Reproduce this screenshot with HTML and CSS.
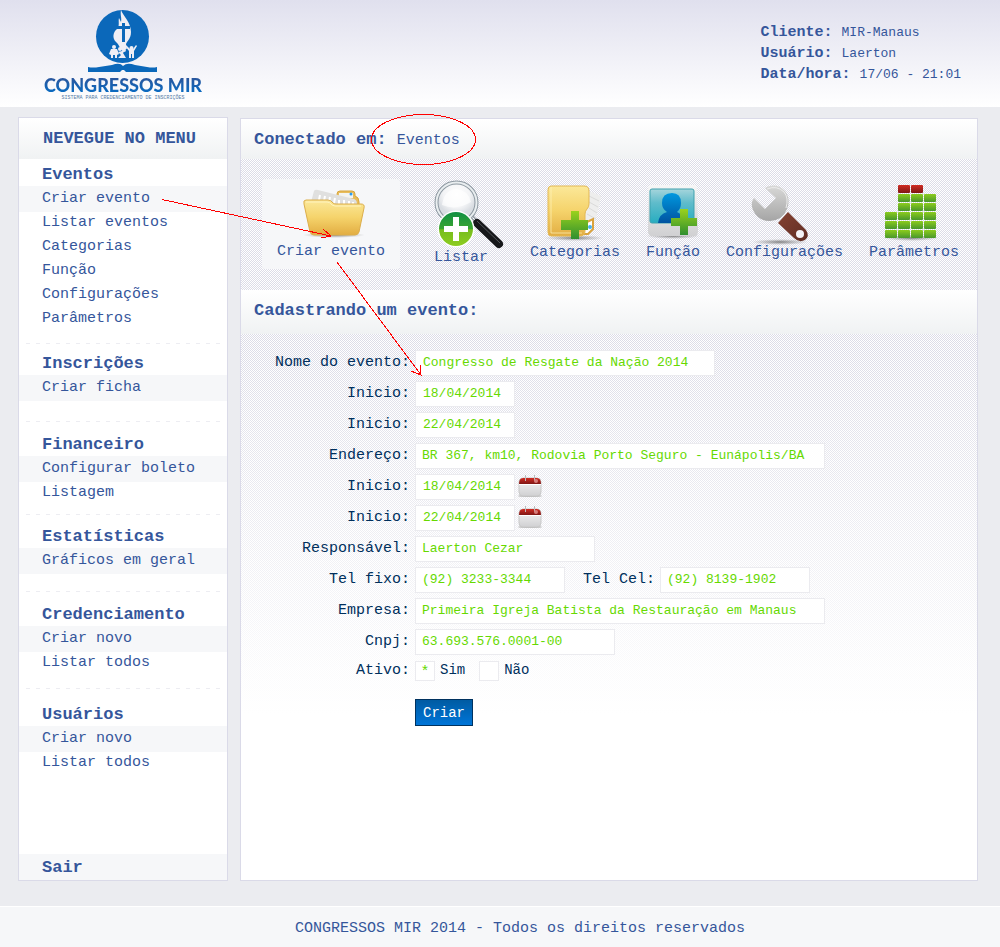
FILE: index.html
```html
<!DOCTYPE html>
<html lang="pt-BR">
<head>
<meta charset="utf-8">
<title>Congressos MIR</title>
<link rel="stylesheet" href="styles.css">
</head>
<body>
<header class="top">
  <a class="logo" href="#">
    <svg class="logo-mark" width="72" height="65" viewBox="0 0 72 65" aria-hidden="true">
      <circle cx="35.500" cy="27.500" r="26.500" fill="#0b68ba"/>
      <path d="M34 1C36 7 44 13 44 23C44 31 39 32 39 36C39 39 41 40 37 40Q41 42 37 43C32 40 33 36 29 33C25 29 26 23 30 20C33 17 31 12 32 9L34 13C35 9 33 6 34 1Z" fill="#eeeef5"/>
      <path d="M36.500 14V33M30 18.500H43" stroke="#0b68ba" stroke-width="3"/>
      <g fill="#eeeef5"><circle cx="27" cy="38" r="2"/><path d="M24 40H30L32 45L30 46V49H28V46H26V49H24V46L22 45Z"/><circle cx="33" cy="40" r="2"/><path d="M31 43L35 42L39 38L40 39L36 44L39 49H31L34 46Z"/><circle cx="44.500" cy="39" r="2"/><path d="M39 36L43 40H46L49 36L50 37L47 42V49H45V45H44V49H42V42L38 37Z"/></g>
      <path d="M1 63V58Q6 59 12 58L25 56Q33 53 36 57Q40 53 48 56L60 58Q66 59 70 58V63H39L37 61L35 61L33 63Z" fill="#0b68ba"/>
    </svg>
    <span class="logo-name">CONGRESSOS MIR</span>
    <span class="logo-tag">SISTEMA PARA CREDENCIAMENTO DE INSCRIÇÕES</span>
  </a>
  <div class="session">
    <div><b>Cliente: </b>MIR-Manaus</div>
    <div><b>Usuário: </b>Laerton</div>
    <div><b>Data/hora: </b>17/06 - 21:01</div>
  </div>
</header>

<main class="columns">
  <nav class="menu">
    <h2 class="bar menu-bar">NEVEGUE NO MENU</h2>
    <section class="group group-events">
      <h3>Eventos</h3>
      <a class="on" href="#">Criar evento</a>
      <a href="#">Listar eventos</a>
      <a href="#">Categorias</a>
      <a href="#">Função</a>
      <a href="#">Configurações</a>
      <a href="#">Parâmetros</a>
    </section>
    <section class="group group-forms">
      <h3>Inscrições</h3>
      <a class="on" href="#">Criar ficha</a>
    </section>
    <section class="group group-finance">
      <h3>Financeiro</h3>
      <a class="on" href="#">Configurar boleto</a>
      <a href="#">Listagem</a>
    </section>
    <section class="group group-stats">
      <h3>Estatísticas</h3>
      <a class="on" href="#">Gráficos em geral</a>
    </section>
    <section class="group group-badges">
      <h3>Credenciamento</h3>
      <a class="on" href="#">Criar novo</a>
      <a href="#">Listar todos</a>
    </section>
    <section class="group group-users">
      <h3>Usuários</h3>
      <a class="on" href="#">Criar novo</a>
      <a href="#">Listar todos</a>
    </section>
    <a class="exit" href="#">Sair</a>
  </nav>

  <div class="panel">
    <h1 class="bar">Conectado em: <span>Eventos</span></h1>
    <nav class="tools">
      <a class="tool tool-on" href="#">
        <svg width="64" height="50" viewBox="0 0 64 50" aria-hidden="true">
          <defs>
            <linearGradient id="gold" x2="0" y2="1"><stop offset="0" stop-color="#fbe899"/><stop offset=".5" stop-color="#f5d36b"/><stop offset="1" stop-color="#e2ad42"/></linearGradient>
            <linearGradient id="green" x2="0" y2="1"><stop offset="0" stop-color="#9bd21c"/><stop offset="1" stop-color="#2f8f2f"/></linearGradient>
            <radialGradient id="shade"><stop offset="0" stop-color="#666" stop-opacity=".8"/><stop offset="1" stop-color="#888" stop-opacity="0"/></radialGradient>
          </defs>
          <ellipse cx="32" cy="47" rx="31" ry="3" fill="url(#shade)"/>
          <path d="M35 12V6Q35 3 38 3H50Q53 3 53 6V8Q57 9 57 14V20H35Z" fill="#e8bd5c" stroke="#d8a53c"/>
          <path d="M37 5H51V10H37Z" fill="#f4f4f1"/><circle cx="49" cy="6" r="1.500" fill="#2b9bf0"/>
          <path d="M9 14L12 3Q13 1 16 2L52 11Q55 12 55 16V24H9Z" fill="#e0e0df"/>
          <path d="M17 12L18 7M22 13L23 8M27 14L28 9M32 15L33 10M37 16V12M42 16V12M47 17V13M51 17V14" stroke="#fff" stroke-width="2"/>
          <path d="M4 12H26Q29 12 31 15Q32 16 34 16H59Q63 16 62 20L57 44Q56 47 53 47H12Q9 47 8 44L2 16Q1 12 4 12Z" fill="url(#gold)" stroke="#dcae4c"/>
          <path d="M4 14H25Q28 14 30 17L33 18H59" fill="none" stroke="#fff3bd"/>
        </svg>
        <span>Criar evento</span>
      </a>
      <a class="tool tool-list" href="#">
        <svg width="70" height="70" viewBox="0 0 70 70" aria-hidden="true">
          <defs>
            <radialGradient id="lens" cy=".3"><stop offset="0" stop-color="#fff"/><stop offset=".65" stop-color="#f3f4f6"/><stop offset="1" stop-color="#d9dde2"/></radialGradient>
            <linearGradient id="disc" x2="0" y2="1"><stop offset="0" stop-color="#119044"/><stop offset=".5" stop-color="#3ba530"/><stop offset=".52" stop-color="#77bd1d"/><stop offset="1" stop-color="#8ccc20"/></linearGradient>
          </defs>
          <path d="M38 37L46 45" stroke="#9da5ad" stroke-width="4"/><path d="M38 37L46 45" stroke="#fff" stroke-width="1"/>
          <circle cx="22.500" cy="22.500" r="20" fill="url(#lens)" stroke="#8d98a1" stroke-width="4"/>
          <circle cx="22.500" cy="22.500" r="20" fill="none" stroke="#e9eef0" stroke-width="2"/>
          <path d="M8 25Q22 31 37 22Q34 10 22 9Q10 10 8 25Z" fill="#fff" opacity=".65"/>
          <path d="M43 43L65 64" stroke="#16171a" stroke-width="8" stroke-linecap="round"/>
          <path d="M43 41L66 63" stroke="#54575b" stroke-width="1"/>
          <circle cx="22" cy="49" r="18.500" fill="#fff"/><circle cx="22" cy="49" r="17" fill="url(#disc)"/>
          <path d="M22 37V61M10 49H34" stroke="#fff" stroke-width="6"/>
        </svg>
        <span>Listar</span>
      </a>
      <a class="tool" href="#">
        <svg width="60" height="58" viewBox="0 0 60 58" aria-hidden="true">
          <ellipse cx="29" cy="55" rx="30" ry="3" fill="url(#shade)"/>
          <path d="M40 8L47 9L56 13L54 24L49 42L40 50L36 30Z" fill="#eeeeed"/>
          <path d="M44 13L54 18M44 19L53 24M44 25L52 30M42 31L51 36" stroke="#dadad9"/>
          <path d="M42 39L48 36V46L43 51H38" fill="#fff" stroke="#daa33e" stroke-width="2"/><circle cx="45" cy="44" r="2" fill="#45b1ee"/>
          <path d="M6 3H39Q44 3 44 8V21Q44 24 42 26Q40 28 40 31V48Q40 53 35 53H6Q3 53 3 49V7Q3 3 6 3Z" fill="url(#gold)" stroke="#e3b854"/>
          <path d="M6 4V50H37" fill="none" stroke="#fff3bb" opacity=".7"/>
          <path d="M26 28H34V37H43V47H34V56H26V47H16V37H26Z" fill="url(#green)"/>
        </svg>
        <span>Categorias</span>
      </a>
      <a class="tool" href="#">
        <svg width="54" height="56" viewBox="0 0 54 56" aria-hidden="true">
          <defs>
            <linearGradient id="sea" x2="0" y2="1"><stop offset="0" stop-color="#a6d5dc"/><stop offset=".4" stop-color="#60bccb"/><stop offset="1" stop-color="#27adc0"/></linearGradient>
            <linearGradient id="blue" x2="0" y2="1"><stop offset="0" stop-color="#0098df"/><stop offset="1" stop-color="#0053a0"/></linearGradient>
            <linearGradient id="frame" x2="0" y2="1"><stop offset="0" stop-color="#f7f7f7"/><stop offset="1" stop-color="#d0d0d2"/></linearGradient>
          </defs>
          <ellipse cx="27" cy="51" rx="27" ry="3" fill="url(#shade)"/>
          <path d="M5 0H48Q51 0 51 4L52 46Q52 51 48 51H6Q2 51 2 46V4Q2 0 5 0Z" fill="url(#frame)"/>
          <rect x="4" y="4" width="44" height="34" rx="2" fill="url(#sea)" stroke="#3fa1ae"/>
          <path d="M12 38Q13 29 21 27Q16 24 16 18Q16 8 26 8Q35 8 35 18Q35 24 31 27Q37 29 38 38Z" fill="url(#blue)"/>
          <path d="M34 24H42V33H51V41H42V50H34V41H25V33H34Z" fill="url(#green)"/>
        </svg>
        <span>Função</span>
      </a>
      <a class="tool" href="#">
        <svg width="64" height="56" viewBox="5 0 64 56" overflow="visible" aria-hidden="true">
          <defs>
            <linearGradient id="steel" x2="0" y2="1"><stop offset="0" stop-color="#d8d8d7"/><stop offset="1" stop-color="#a5a5a5"/></linearGradient>
            <linearGradient id="wood" x2="1" y2="1"><stop offset="0" stop-color="#854232"/><stop offset="1" stop-color="#5f2c23"/></linearGradient>
          </defs>
          <ellipse cx="32" cy="57" rx="28" ry="3" fill="url(#shade)"/>
          <path d="M17 3Q28 -3 37 6Q43 14 39 24Q35 35 22 36Q10 36 5 25Q2 18 6 13L17 24L28 13Z" fill="url(#steel)"/>
          <path d="M19 4Q29 0 36 7Q41 13 38 23" fill="none" stroke="#ededed"/>
          <path d="M40 27L58 45Q62 51 57 55Q51 58 46 53L30 38Z" fill="url(#wood)"/>
          <circle cx="52" cy="49" r="4" fill="#f4f2f6"/>
        </svg>
        <span>Configurações</span>
      </a>
      <a class="tool" href="#">
        <svg width="58" height="56" viewBox="3 0 58 56" overflow="visible" aria-hidden="true">
          <defs>
            <linearGradient id="leaf" x2="0" y2="1"><stop offset="0" stop-color="#8ccc1d"/><stop offset="1" stop-color="#49972c"/></linearGradient>
            <linearGradient id="ruby" x2="0" y2="1"><stop offset="0" stop-color="#d12b22"/><stop offset="1" stop-color="#7e1715"/></linearGradient>
          </defs>
          <ellipse cx="29" cy="53" rx="28" ry="3" fill="url(#shade)"/>
          <g fill="url(#ruby)"><rect x="16" y="0" width="12" height="8" rx="1"/><rect x="29" y="0" width="12" height="8" rx="1"/></g>
          <g fill="url(#leaf)">
            <rect x="16" y="9" width="12" height="8" rx="1"/><rect x="29" y="9" width="12" height="8" rx="1"/><rect x="42" y="9" width="12" height="8" rx="1"/>
            <rect x="16" y="18" width="12" height="8" rx="1"/><rect x="29" y="18" width="12" height="8" rx="1"/><rect x="42" y="18" width="12" height="8" rx="1"/>
            <rect x="3" y="27" width="12" height="8" rx="1"/><rect x="16" y="27" width="12" height="8" rx="1"/><rect x="29" y="27" width="12" height="8" rx="1"/><rect x="42" y="27" width="12" height="8" rx="1"/>
            <rect x="3" y="36" width="12" height="8" rx="1"/><rect x="16" y="36" width="12" height="8" rx="1"/><rect x="29" y="36" width="12" height="8" rx="1"/><rect x="42" y="36" width="12" height="8" rx="1"/>
            <rect x="3" y="45" width="12" height="8" rx="1"/><rect x="16" y="45" width="12" height="8" rx="1"/><rect x="29" y="45" width="12" height="8" rx="1"/><rect x="42" y="45" width="12" height="8" rx="1"/>
          </g>
        </svg>
        <span>Parâmetros</span>
      </a>
    </nav>

    <h2 class="bar bar-form">Cadastrando um evento:</h2>
    <form class="form">
      <label for="nome">Nome do evento:</label>
      <div class="cell"><input class="field w300" id="nome" value="Congresso de Resgate da Nação 2014"></div>
      <label for="ini1">Inicio:</label>
      <div class="cell"><input class="field w100" id="ini1" value="18/04/2014"></div>
      <label for="ini2">Inicio:</label>
      <div class="cell"><input class="field w100" id="ini2" value="22/04/2014"></div>
      <label for="end">Endereço:</label>
      <div class="cell"><input class="field w410" id="end" value="BR 367, km10, Rodovia Porto Seguro - Eunápolis/BA"></div>
      <label for="ini3">Inicio:</label>
      <div class="cell"><input class="field w100" id="ini3" value="18/04/2014">
        <button class="cal" type="button" aria-label="Calendário"><svg width="24" height="24" viewBox="0 0 24 24" aria-hidden="true">
          <ellipse cx="12" cy="21" rx="12" ry="1" fill="#bbb"/>
          <rect x="1" y="3" width="22" height="18" rx="4" fill="url(#frame)" stroke="#c9c9c9"/>
          <path d="M1 9Q1 3 5 3H19Q23 3 23 9Z" fill="url(#ruby)"/><path d="M1 9.500H23" stroke="#fff"/>
          <path d="M7.500 0V6M16.500 0V6" stroke="#bbb"/><circle cx="18" cy="6" r="2" fill="#d77b78"/>
        </svg></button></div>
      <label for="ini4">Inicio:</label>
      <div class="cell"><input class="field w100" id="ini4" value="22/04/2014">
        <button class="cal" type="button" aria-label="Calendário"><svg width="24" height="24" viewBox="0 0 24 24" aria-hidden="true">
          <ellipse cx="12" cy="21" rx="12" ry="1" fill="#bbb"/>
          <rect x="1" y="3" width="22" height="18" rx="4" fill="url(#frame)" stroke="#c9c9c9"/>
          <path d="M1 9Q1 3 5 3H19Q23 3 23 9Z" fill="url(#ruby)"/><path d="M1 9.500H23" stroke="#fff"/>
          <path d="M7.500 0V6M16.500 0V6" stroke="#bbb"/><circle cx="18" cy="6" r="2" fill="#d77b78"/>
        </svg></button></div>
      <label for="resp">Responsável:</label>
      <div class="cell"><input class="field w180" id="resp" value="Laerton Cezar"></div>
      <label for="fixo">Tel fixo:</label>
      <div class="cell"><input class="field w150" id="fixo" value="(92) 3233-3344">
        <label class="inner" for="cel">Tel Cel:</label><input class="field w150" id="cel" value="(92) 8139-1902"></div>
      <label for="emp">Empresa:</label>
      <div class="cell"><input class="field w410" id="emp" value="Primeira Igreja Batista da Restauração em Manaus"></div>
      <label for="cnpj">Cnpj:</label>
      <div class="cell"><input class="field w200" id="cnpj" value="63.693.576.0001-00"></div>
      <span class="caption" id="ativo">Ativo:</span>
      <div class="cell choices" role="radiogroup" aria-labelledby="ativo">
        <label><input type="radio" name="ativo" checked>Sim</label>
        <label><input type="radio" name="ativo">Não</label>
      </div>
      <button class="submit" type="submit">Criar</button>
    </form>
  </div>
</main>

<footer class="foot">CONGRESSOS MIR 2014 - Todos os direitos reservados</footer>

<svg class="marks" width="480" height="380" viewBox="0 0 480 380" aria-hidden="true">
  <ellipse cx="423.500" cy="139.500" rx="52" ry="25"/>
  <path d="M162 199.500L331 236M323 229L331 236L321 238"/>
  <path d="M337 262L421 375M411 371L421 375L420 365"/>
</svg>
</body>
</html>
```

FILE: styles.css
```css
* { box-sizing: border-box; }

body {
  margin: 0;
  min-height: 100vh;
  display: flex;
  flex-direction: column;
  position: relative;
  background: #ebecf0;
  color: #35569b;
  font: 15px/24px "Liberation Mono", "Courier New", monospace;
}

a { color: inherit; text-decoration: none; }
h1, h2, h3 { margin: 0; font-size: 17px; line-height: 24px; }
svg { display: block; }

.top {
  display: flex;
  justify-content: space-between;
  height: 107px;
  padding: 9px 39px 0 44px;
  background: linear-gradient(#e0e0ee, #fff);
}

.logo { display: flex; flex-direction: column; align-items: center; }
.logo-name {
  font: 900 18px/22px Lato, sans-serif;
  color: transparent;
  background: linear-gradient(#345092, #0070cb);
  background-clip: text;
}
.logo-tag { font-size: 5px; line-height: 4px; color: #557ba6; }

.session { padding-top: 13px; font-size: 13px; line-height: 21px; }
.session b { font-size: 15px; white-space: pre; }

.columns {
  flex: 1;
  display: flex;
  gap: 12px;
  padding: 10px 22px 25px 18px;
}

.bar {
  height: 40px;
  padding: 9px 13px 0;
  background: linear-gradient(#fff, #f0f2f3);
}
.bar span { font-size: 15px; font-weight: normal; }
.bar-form { height: 44px; }

.menu {
  flex: 0 0 210px;
  display: flex;
  flex-direction: column;
  border: 1px solid #dadae8;
  background: #fff;
}
.menu-bar { height: 41px; padding-left: 24px; margin-bottom: 3px; }
.group h3, .group a { display: block; height: 24px; padding: 1px 0 0 23px; }
.group .on { height: 26px; margin-bottom: -2px; background: #f6f7f9; }
.group::after {
  content: "";
  display: block;
  height: 1px;
  margin: 0 7px;
  background: repeating-linear-gradient(90deg, #ededf2 0 4px, transparent 4px 10px);
}
.group-events::after { margin-top: 13px; margin-bottom: 7px; }
.group-forms::after { margin-top: 22px; margin-bottom: 10px; }
.group-finance::after { margin-top: 10px; margin-bottom: 9px; }
.group-stats::after { margin-top: 19px; margin-bottom: 10px; }
.group-badges::after { margin-top: 14px; margin-bottom: 13px; }
.group-users::after { display: none; }
.exit {
  margin-top: auto;
  padding: 2px 0 0 23px;
  background: #f6f7f9;
  font-size: 17px;
  font-weight: bold;
}

.panel {
  flex: 1;
  min-width: 0;
  display: flex;
  flex-direction: column;
  margin-top: 1px;
  border: 1px solid #dadae8;
  background: #fff;
}

.tools {
  display: flex;
  align-items: flex-start;
  gap: 26px;
  padding: 20px 12px 20px 21px;
  background: repeating-conic-gradient(#dcdce7 0 25%, #fff 0 50%) 0 0 / 2px 2px;
}
.tool {
  flex: none;
  display: flex;
  flex-direction: column;
  align-items: center;
  justify-content: flex-end;
  height: 86px;
}
.tool-on { width: 138px; height: 90px; padding-bottom: 5px; background: #f6f7f9; border-radius: 3px; }
.tool-on svg { margin: 0 0 2px 6px; }
.tool-list { height: 91px; padding-left: 8px; align-items: flex-start; }
.tool-list svg { margin-bottom: -4px; }

.form {
  flex: 1;
  display: grid;
  grid-template-columns: 169px 1fr;
  grid-auto-rows: min-content;
  gap: 5px;
  padding: 16px 0;
  color: #002f5c;
  background:
    linear-gradient(rgba(255, 255, 255, 0), #fff 380px),
    repeating-conic-gradient(#dcdce7 0 25%, #fff 0 50%) 0 0 / 2px 2px;
}
.form > label, .caption { padding-top: 1px; text-align: right; }
.cell { display: flex; align-items: center; }
.field {
  height: 26px;
  padding: 0 6px 1px;
  border: 1px solid #ebebef;
  background: #fff;
  color: #66d900;
  font: inherit;
  font-size: 13px;
}
.w100 { width: 100px; padding: 0 7px 1px; }
.w150 { width: 150px; }
.w180 { width: 180px; }
.w200 { width: 200px; }
.w300 { width: 300px; padding: 0 7px 1px; }
.w410 { width: 410px; }
.inner { padding: 0 5px 0 18px; }
.cal { margin-left: 3px; padding: 0; border: 0; background: none; }

.caption { line-height: 20px; }
.choices { gap: 14px; }
.choices label { display: flex; align-items: center; gap: 5px; font-size: 14px; line-height: 21px; }
.choices input {
  appearance: none;
  width: 20px;
  height: 20px;
  margin: 0;
  border: 1px solid #ebebef;
  background: #fff;
  color: #66d900;
  font: 15px/22px "Liberation Mono", monospace;
  text-align: center;
}
.choices input:checked::before { content: "*"; }

.submit {
  grid-column: 2;
  justify-self: start;
  height: 27px;
  margin-top: 13px;
  padding: 0 7px;
  border: 1px solid #00325f;
  background: linear-gradient(#005ba2, #0075d8);
  color: #fff;
  font: inherit;
  font-size: 14px;
}

.foot {
  padding: 10px 0 6px 40px;
  border-top: 1px solid #fff;
  background: #f6f7f9;
  text-align: center;
}

.marks {
  position: absolute;
  top: 0;
  left: 0;
  pointer-events: none;
  fill: none;
  stroke: #f00;
  shape-rendering: crispEdges;
}
```
